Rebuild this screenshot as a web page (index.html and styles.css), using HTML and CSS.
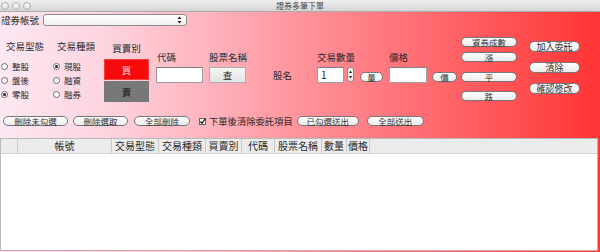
FILE: index.html
```html
<!DOCTYPE html>
<html lang="zh-Hant">
<head>
<meta charset="utf-8">
<title>證券多筆下單</title>
<link rel="stylesheet" href="styles.css">
</head>
<body>
<div class="window">
  <div class="titlebar">
    <div class="lights"><span class="light"></span><span class="light"></span><span class="light"></span></div>
    <div class="title">證券多筆下單</div>
    <div></div>
  </div>
  <div class="content">
    <div class="acct-row">
      <span class="acct-label">證券帳號</span>
      <div class="select">
        <svg class="updown" width="5" height="8" viewBox="0 0 5 8"><path d="M2.5 0.5 L4.5 3 L0.5 3 Z M2.5 7.5 L4.5 5 L0.5 5 Z" fill="#222"/></svg>
      </div>
    </div>

    <div class="form">
      <div class="col col-type">
        <div class="label">交易型態</div>
        <div class="radios">
          <div class="radio"><span class="rb"></span>整股</div>
          <div class="radio"><span class="rb"></span>盤後</div>
          <div class="radio"><span class="rb on"></span>零股</div>
        </div>
      </div>
      <div class="col col-kind">
        <div class="label">交易種類</div>
        <div class="radios">
          <div class="radio"><span class="rb on"></span>現股</div>
          <div class="radio"><span class="rb"></span>融資</div>
          <div class="radio"><span class="rb"></span>融券</div>
        </div>
      </div>
      <div class="col col-bs">
        <div class="label center">買賣別</div>
        <div class="bs-btn buy">買</div>
        <div class="bs-btn sell">賣</div>
      </div>
      <div class="col col-code">
        <div class="label">代碼</div>
        <div class="field code-field"></div>
      </div>
      <div class="col col-name">
        <div class="label center">股票名稱</div>
        <div class="sq-btn">查</div>
      </div>
      <div class="col col-sname">股名</div>
      <div class="col col-qty">
        <div class="label">交易數量</div>
        <div class="qty-row">
          <div class="field qty-field">1</div>
          <div class="stepper">
            <svg width="5" height="11" viewBox="0 0 5 11"><path d="M2.5 1.5 L4.3 4 L0.7 4 Z M2.5 9.5 L4.3 7 L0.7 7 Z" fill="#333"/></svg>
          </div>
        </div>
      </div>
      <div class="col col-qbtn"><div class="pill w-q">量</div></div>
      <div class="col col-price">
        <div class="label">價格</div>
        <div class="field price-field"></div>
      </div>
      <div class="col col-pbtn"><div class="pill w-p">價</div></div>
      <div class="col col-pills1">
        <div class="pill p1">資券成數</div>
        <div class="pill p2">漲</div>
        <div class="pill p3">平</div>
        <div class="pill p4">跌</div>
      </div>
      <div class="col col-pills2">
        <div class="pill big q1">加入委託</div>
        <div class="pill big q2">清除</div>
        <div class="pill big q3">確認修改</div>
      </div>
    </div>

    <div class="actions">
      <div class="pill a1">刪除未勾選</div>
      <div class="pill a2">刪除選取</div>
      <div class="pill a3">全部刪除</div>
      <div class="check">
        <svg width="7" height="7" viewBox="0 0 7 7"><rect x="0.5" y="0.5" width="6" height="6" fill="#fff" stroke="#666"/><path d="M1.5 3.5 L3 5.2 L6.5 0.5" fill="none" stroke="#111" stroke-width="1.2"/></svg>
        <span class="check-text">下單後清除委託項目</span>
      </div>
      <div class="pill a4">已勾選送出</div>
      <div class="pill a5">全部送出</div>
    </div>

    <div class="table">
      <div class="thead">
        <div class="th"></div>
        <div class="th">帳號</div>
        <div class="th">交易型態</div>
        <div class="th">交易種類</div>
        <div class="th">買賣別</div>
        <div class="th">代碼</div>
        <div class="th">股票名稱</div>
        <div class="th">數量</div>
        <div class="th">價格</div>
        <div class="th last"></div>
      </div>
      <div class="tbody"></div>
    </div>
  </div>
</div>
</body>
</html>
```

FILE: styles.css
```css
* { box-sizing: border-box; }
html, body { margin: 0; padding: 0; }
body {
  width: 600px;
  height: 252px;
  overflow: hidden;
  font-family: "Noto Sans CJK TC", "Noto Sans", sans-serif;
  color: #2a2a2a;
  background: #fff;
}
.window {
  width: 600px;
  height: 252px;
  display: flex;
  flex-direction: column;
  background: linear-gradient(90deg, #fce8f2 0%, #fdd3de 18%, #ffb3bd 35%, #ff939b 50%, #ff7177 68%, #ff5153 85%, #ff3434 100%);
}
.titlebar {
  height: 12px;
  flex: none;
  display: grid;
  grid-template-columns: 1fr auto 1fr;
  align-items: center;
  background: linear-gradient(#efefef, #d5d5d5);
  border-bottom: 1px solid #a9a9a9;
}
.lights { display: flex; gap: 3px; padding-left: 1px; }
.light {
  width: 8px;
  height: 8px;
  border-radius: 50%;
  border: 1px solid #b3b3b3;
  background: radial-gradient(circle at 50% 35%, #fbfbfb, #d2d2d2);
}
.title { font-size: 8px; line-height: 11px; color: #4a4a4a; }

.content { flex: 1; display: flex; flex-direction: column; }

.acct-row { display: flex; align-items: center; height: 12px; margin-top: 2px; flex: none; }
.acct-label { font-size: 9.5px; line-height: 12px; width: 42px; margin-left: 1px; }
.select {
  width: 144px;
  height: 12px;
  border: 1px solid #8c8c8c;
  border-radius: 3px;
  background: linear-gradient(#ffffff, #efefef);
  display: flex;
  justify-content: flex-end;
  align-items: center;
  padding-right: 4px;
}

.form { display: flex; align-items: flex-start; margin-top: 4px; height: 72px; flex: none; }
.col { flex: none; }
.label { font-size: 9.5px; line-height: 12px; height: 12px; white-space: nowrap; }
.label.center { text-align: center; }

.col-type { width: 51px; margin-left: 1px; padding-top: 10px; }
.col-type .label { padding-left: 5px; }
.col-kind { width: 52px; padding-top: 10px; }
.col-kind .label { padding-left: 5px; }
.radios { margin-top: 7px; }
.radio { display: flex; align-items: center; height: 14px; font-size: 8.5px; white-space: nowrap; }
.col-kind .radio { padding-left: 1px; }
.rb {
  width: 7px;
  height: 7px;
  border-radius: 50%;
  border: 1px solid #6a6a6a;
  background: #fff;
  margin-right: 4px;
  display: flex;
  align-items: center;
  justify-content: center;
}
.rb.on::after { content: ""; width: 3px; height: 3px; border-radius: 50%; background: #222; }

.col-bs { width: 45px; padding-top: 12px; }
.bs-btn { height: 21px; display: flex; align-items: center; justify-content: center; font-size: 9.5px; }
.buy { margin-top: 5px; background: #f50b0b; color: #ffd8d8; border: 1px solid #f04040; }
.sell { margin-top: 1px; background: #787878; color: #151515; }

.col-code { width: 47px; margin-left: 7px; padding-top: 21px; }
.col-code .label { padding-left: 1px; }
.field { height: 16px; background: #fff; border: 1px solid #9d9d9d; border-top-color: #7d7d7d; margin-top: 4px; }
.col-name { width: 37px; margin-left: 6px; padding-top: 21px; }
.sq-btn {
  height: 16px;
  margin-top: 4px;
  background: linear-gradient(#f6f6f6, #e3e3e3);
  border: 1px solid #acacac;
  font-size: 9.5px;
  display: flex;
  align-items: center;
  justify-content: center;
}
.col-sname { margin-left: 27px; padding-top: 39px; font-size: 9.5px; line-height: 12px; width: 25px; }

.col-qty { width: 37px; margin-left: 19px; padding-top: 21px; }
.qty-row { display: flex; align-items: flex-start; gap: 3px; }
.qty-field { width: 27px; font-size: 10px; line-height: 14px; padding-left: 3px; color: #111; }
.stepper {
  width: 7px;
  height: 15px;
  margin-top: 4px;
  border: 1px solid #8a8a8a;
  border-radius: 3px;
  background: linear-gradient(#ffffff, #e6e6e6);
  display: flex;
  align-items: center;
  justify-content: center;
}

.col-qbtn { margin-left: 6px; padding-top: 42px; }
.col-price { width: 38px; margin-left: 6px; padding-top: 21px; }
.col-pbtn { margin-left: 5px; padding-top: 42px; }

.pill {
  height: 10px;
  border: 1px solid #767676;
  border-radius: 6px;
  background: linear-gradient(#ffffff, #ececec);
  font-size: 8.5px;
  line-height: 8px;
  color: #333;
  white-space: nowrap;
  display: flex;
  align-items: center;
  justify-content: center;
  flex: none;
}
.w-q { width: 23px; }
.w-p { width: 25px; }

.col-pills1 { width: 56px; margin-left: 4px; padding-top: 7px; }
.p2 { margin-top: 5px; }
.p3 { margin-top: 9.5px; }
.p4 { margin-top: 9.5px; }
.col-pills2 { width: 51px; margin-left: 12px; padding-top: 11px; }
.pill.big { height: 11px; font-size: 9px; line-height: 9px; }
.q2, .q3 { margin-top: 10px; }

.actions { display: flex; align-items: center; height: 10px; margin-top: 14px; flex: none; }
.a1 { width: 65px; margin-left: 3px; }
.a2 { width: 55px; margin-left: 5px; }
.a3 { width: 56px; margin-left: 6px; }
.check { display: flex; align-items: center; margin-left: 9px; }
.check svg { display: block; }
.check-text { font-size: 9.3px; margin-left: 3px; white-space: nowrap; }
.a4 { width: 62px; margin-left: 4px; }
.a5 { width: 57px; margin-left: 8px; }

.table {
  margin-top: 12px;
  margin-bottom: 1px;
  width: 598px;
  flex: 1;
  background: #fff;
  border: 1px solid #b9b9b9;
  border-bottom-color: #d7a3aa;
  display: flex;
  flex-direction: column;
}
.thead {
  display: grid;
  grid-template-columns: 17px 94px 47px 47px 36px 33px 47px 25px 23px 1fr;
  height: 15px;
  background: #ececec;
  border-bottom: 1px solid #d2d2d2;
  flex: none;
}
.th {
  border-right: 1px solid #cacaca;
  font-size: 10px;
  line-height: 14px;
  text-align: center;
  white-space: nowrap;
  overflow: hidden;
  color: #2a2a2a;
}
.th.last { border-right: none; }
.tbody { flex: 1; }
```
